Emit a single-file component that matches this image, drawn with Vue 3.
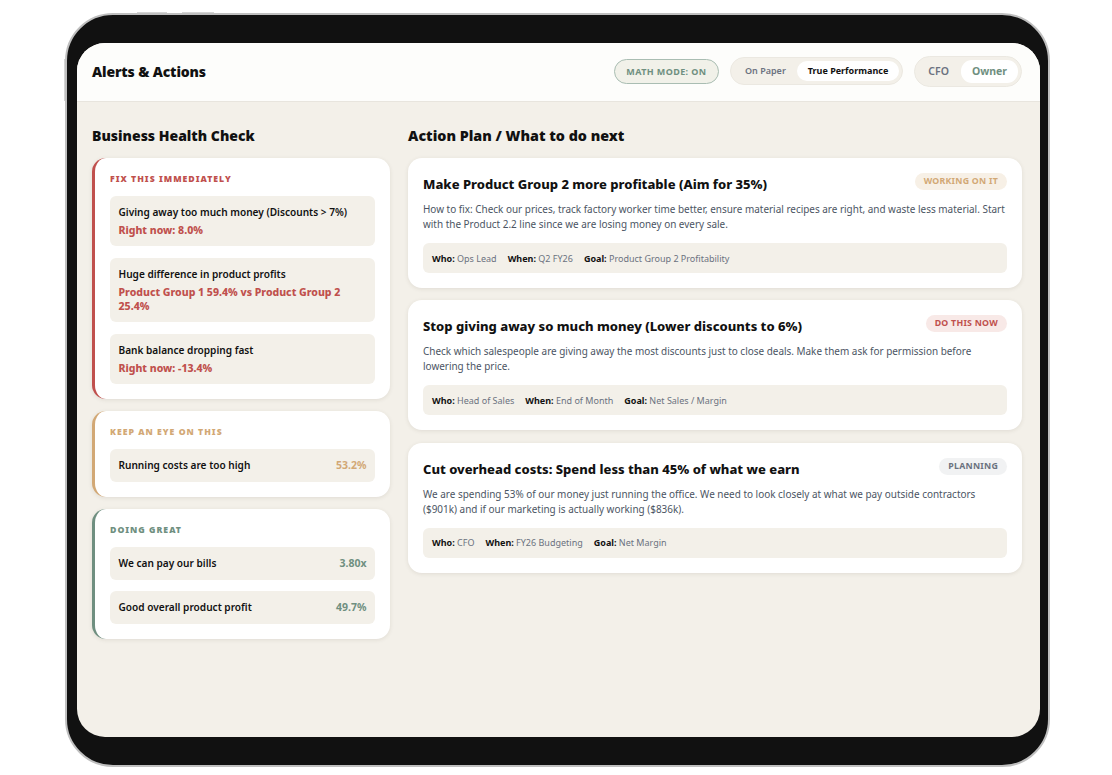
<template>
  <div class="page">
    <div class="device">
      <span class="side-btn top-a"></span>
      <span class="side-btn top-b"></span>
      <span class="side-btn left-a"></span>
      <div class="screen">
        <header class="topbar">
          <h1>Alerts &amp; Actions</h1>
          <div class="controls">
            <span class="math-mode">MATH MODE: ON</span>
            <div class="toggle small">
              <span class="opt">On Paper</span>
              <span class="opt active">True Performance</span>
            </div>
            <div class="toggle role">
              <span class="opt">CFO</span>
              <span class="opt active">Owner</span>
            </div>
          </div>
        </header>

        <main class="content">
          <section class="left-col">
            <h2>Business Health Check</h2>
            <div v-for="group in healthGroups" :key="group.title" class="health-card" :class="group.tone">
              <div class="health-title">{{ group.title }}</div>
              <div class="health-items">
                <div v-for="item in group.items" :key="item.label" class="health-item" :class="{ inline: item.value }">
                  <div class="item-label">{{ item.label }}</div>
                  <div v-if="item.value" class="item-value">{{ item.value }}</div>
                  <div v-else class="item-detail">{{ item.detail }}</div>
                </div>
              </div>
            </div>
          </section>

          <section class="right-col">
            <h2>Action Plan / What to do next</h2>
            <article v-for="action in actions" :key="action.title" class="action-card">
              <div class="action-head">
                <h3>{{ action.title }}</h3>
                <span class="badge" :class="action.tone">{{ action.status }}</span>
              </div>
              <p>{{ action.text }}</p>
              <div class="meta">
                <span><b>Who:</b> {{ action.who }}</span>
                <span><b>When:</b> {{ action.when }}</span>
                <span><b>Goal:</b> {{ action.goal }}</span>
              </div>
            </article>
          </section>
        </main>
      </div>
    </div>
  </div>
</template>

<script setup>
const healthGroups = [
  {
    title: 'FIX THIS IMMEDIATELY',
    tone: 'red',
    items: [
      { label: 'Giving away too much money (Discounts > 7%)', detail: 'Right now: 8.0%' },
      { label: 'Huge difference in product profits', detail: 'Product Group 1 59.4% vs Product Group 2 25.4%' },
      { label: 'Bank balance dropping fast', detail: 'Right now: -13.4%' },
    ],
  },
  {
    title: 'KEEP AN EYE ON THIS',
    tone: 'amber',
    items: [{ label: 'Running costs are too high', value: '53.2%' }],
  },
  {
    title: 'DOING GREAT',
    tone: 'green',
    items: [
      { label: 'We can pay our bills', value: '3.80x' },
      { label: 'Good overall product profit', value: '49.7%' },
    ],
  },
]

const actions = [
  {
    title: 'Make Product Group 2 more profitable (Aim for 35%)',
    status: 'WORKING ON IT',
    tone: 'amber',
    text: 'How to fix: Check our prices, track factory worker time better, ensure material recipes are right, and waste less material. Start with the Product 2.2 line since we are losing money on every sale.',
    who: 'Ops Lead',
    when: 'Q2 FY26',
    goal: 'Product Group 2 Profitability',
  },
  {
    title: 'Stop giving away so much money (Lower discounts to 6%)',
    status: 'DO THIS NOW',
    tone: 'red',
    text: 'Check which salespeople are giving away the most discounts just to close deals. Make them ask for permission before lowering the price.',
    who: 'Head of Sales',
    when: 'End of Month',
    goal: 'Net Sales / Margin',
  },
  {
    title: 'Cut overhead costs: Spend less than 45% of what we earn',
    status: 'PLANNING',
    tone: 'grey',
    text: 'We are spending 53% of our money just running the office. We need to look closely at what we pay outside contractors ($901k) and if our marketing is actually working ($836k).',
    who: 'CFO',
    when: 'FY26 Budgeting',
    goal: 'Net Margin',
  },
]
</script>

<style>
html,
body {
  margin: 0;
  background: #fff;
}
</style>

<style scoped>
.page {
  width: 1112px;
  height: 775px;
  box-sizing: border-box;
  padding: 13px 62px 8px 65px;
  font-family: "Noto Sans", "Open Sans", sans-serif;
  color: #111;
}

.device {
  position: relative;
  height: 100%;
  box-sizing: border-box;
  padding: 28px 8px 28px 10px;
  background: #111;
  border: 2px solid #bfbfbf;
  border-radius: 48px;
}

.side-btn {
  position: absolute;
  background: #d4d4d4;
}

.top-a {
  top: -3px;
  left: 70px;
  width: 30px;
  height: 1px;
}

.top-b {
  top: -3px;
  left: 115px;
  width: 32px;
  height: 1px;
}

.left-a {
  top: 44px;
  left: -3px;
  width: 1px;
  height: 42px;
}

.screen {
  height: 100%;
  background: #f3f0e9;
  border-radius: 28px;
  overflow: hidden;
}

.topbar {
  display: flex;
  justify-content: space-between;
  align-items: center;
  box-sizing: border-box;
  height: 59px;
  padding: 0 18px 2px 15px;
  background: #fdfdfb;
  border-bottom: 1px solid #e8e5de;
}

h1 {
  margin: 1px 0 0;
  font-size: 14px;
  font-weight: 900;
  letter-spacing: -0.15px;
}

.controls {
  display: flex;
  align-items: center;
  gap: 11px;
}

.math-mode {
  padding: 5px 11.5px;
  font-size: 9px;
  font-weight: 700;
  line-height: 13px;
  letter-spacing: 0.4px;
  color: #6f8f80;
  background: #f1f1e9;
  border: 1px solid #a9bdb2;
  border-radius: 13px;
}

.toggle {
  display: flex;
  align-items: center;
  padding: 3px;
  background: #f3f0e9;
  border: 1px solid #ebe8e1;
  border-radius: 15px;
}

.opt {
  padding: 3px 11px;
  font-size: 9px;
  font-weight: 600;
  line-height: 14px;
  color: #6b7280;
}

.opt.active {
  color: #111;
  font-weight: 700;
  background: #fff;
  border-radius: 11px;
}

.role {
  border-radius: 16px;
}

.role .opt {
  padding: 3px 12px 3px 10px;
  font-size: 10.5px;
  line-height: 17px;
}

.role .opt.active {
  padding: 3px 11px;
  color: #6f8f80;
}

.content {
  display: grid;
  grid-template-columns: 298px 614px;
  gap: 18px;
  padding: 25px 18px 0 15px;
}

h2 {
  margin: 0 0 14px;
  font-size: 14.3px;
  font-weight: 900;
  line-height: 17px;
}

.left-col h2 {
  font-size: 14px;
}

.health-card {
  margin-bottom: 12.3px;
  padding: 15px 15px 15px;
  background: #fff;
  border-left: 3px solid #c0504d;
  border-radius: 14px;
  box-shadow: 0 1px 4px rgba(60, 50, 30, 0.1);
}

.health-card.amber {
  border-left-color: #d2a875;
}

.health-card.green {
  border-left-color: #6f8f80;
}

.health-title {
  margin-bottom: 10px;
  font-size: 8.7px;
  font-weight: 900;
  line-height: 13px;
  letter-spacing: 1px;
  color: #c0504d;
}

.amber .health-title,
.amber .item-value {
  color: #d2a875;
}

.green .health-title,
.green .item-value {
  color: #6f8f80;
}

.health-items {
  display: flex;
  flex-direction: column;
  gap: 11.8px;
}

.health-item {
  padding: 9px 8.5px 8.5px;
  background: #f3f0e9;
  border-radius: 6px;
}

.health-item.inline {
  display: flex;
  justify-content: space-between;
  align-items: center;
}

.item-label {
  font-size: 10.1px;
  font-weight: 600;
  line-height: 15px;
}

.item-detail {
  margin-top: 3px;
  font-size: 10.5px;
  font-weight: 800;
  line-height: 14.5px;
  color: #c0504d;
}

.item-value {
  font-size: 10.5px;
  font-weight: 700;
  line-height: 15px;
}

.action-card {
  margin-bottom: 12.3px;
  padding: 15px;
  background: #fff;
  border-radius: 14px;
  box-shadow: 0 1px 4px rgba(60, 50, 30, 0.1);
}

.action-head {
  display: flex;
  justify-content: space-between;
  align-items: flex-start;
  margin-bottom: 8px;
}

h3 {
  margin: 0;
  padding-top: 1px;
  font-size: 13px;
  font-weight: 800;
  line-height: 20px;
}

.badge {
  padding: 2px 9px;
  font-size: 8.8px;
  font-weight: 700;
  line-height: 13px;
  letter-spacing: 0.25px;
  border-radius: 9px;
}

.badge.amber {
  color: #d2a875;
  background: #f7f0e6;
}

.badge.red {
  color: #c0504d;
  background: #f8e9e7;
}

.badge.grey {
  color: #6b7280;
  background: #f1f2f3;
}

p {
  margin: 0 0 11px;
  font-size: 9.95px;
  line-height: 15px;
  color: #4b5563;
}

.meta {
  display: flex;
  gap: 11px;
  align-items: center;
  height: 30px;
  padding: 0 9px;
  font-size: 9px;
  color: #6b7280;
  background: #f3f0e9;
  border-radius: 6px;
}

.meta b {
  color: #111;
}
</style>
